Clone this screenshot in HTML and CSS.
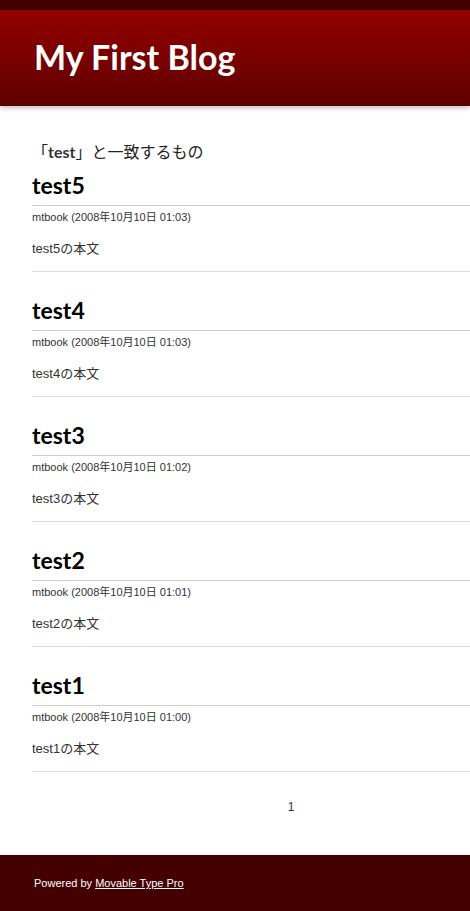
FILE: index.html
```html
<!DOCTYPE html>
<html lang="ja">
<head>
  <meta charset="UTF-8">
  <title>My First Blog: 検索結果</title>
  <link rel="stylesheet" href="styles.css">
</head>
<body>

  <div class="topbar"></div>
  <div class="header">
    <h1 class="blog-name">My First Blog</h1>
  </div>

  <div class="content">
    <h2 class="search-title">「<strong>test</strong>」と一致するもの</h2>

    <div class="entry">
      <h3 class="entry-title">test5</h3>
      <div class="entry-meta">mtbook (2008年10月10日 01:03)</div>
      <div class="entry-body">test5の本文</div>
    </div>

    <div class="entry">
      <h3 class="entry-title">test4</h3>
      <div class="entry-meta">mtbook (2008年10月10日 01:03)</div>
      <div class="entry-body">test4の本文</div>
    </div>

    <div class="entry">
      <h3 class="entry-title">test3</h3>
      <div class="entry-meta">mtbook (2008年10月10日 01:02)</div>
      <div class="entry-body">test3の本文</div>
    </div>

    <div class="entry">
      <h3 class="entry-title">test2</h3>
      <div class="entry-meta">mtbook (2008年10月10日 01:01)</div>
      <div class="entry-body">test2の本文</div>
    </div>

    <div class="entry">
      <h3 class="entry-title">test1</h3>
      <div class="entry-meta">mtbook (2008年10月10日 01:00)</div>
      <div class="entry-body">test1の本文</div>
    </div>

    <div class="pager">1</div>
  </div>

  <div class="footer">
    Powered by <a href="#">Movable Type Pro</a>
  </div>

</body>
</html>
```

FILE: styles.css
```css
body {
  margin: 0;
  font-family: "Liberation Sans", "Noto Sans CJK JP", sans-serif;
  color: #333;
  background-color: #fff;
}
.topbar {
  height: 10px;
  background-color: #440000;
}
.header {
  height: 96px;
  background: linear-gradient(#930000, #5e0000);
  box-shadow: 0 2px 5px rgba(0, 0, 0, 0.25);
  display: flex;
  align-items: center;
}
.blog-name {
  margin: 0 0 4px 34px;
  font-family: Lato, sans-serif;
  font-size: 34px;
  font-weight: bold;
  color: #fff;
}
.content {
  padding: 33px 0 41px 32px;
}
.search-title {
  margin: 0 0 3px;
  font-size: 16px;
  font-weight: normal;
  line-height: 24px;
  color: #222;
  font-family: "Noto Sans CJK JP", sans-serif;
}
.search-title strong {
  font-family: Lato, sans-serif;
  color: #333;
}
.entry {
  padding: 4px 0 14px;
  border-bottom: 1px solid #ddd;
  margin-bottom: 20px;
}
.entry-title {
  margin: 0;
  font-family: Lato, sans-serif;
  font-size: 23px;
  line-height: 28px;
  color: #000;
  padding-bottom: 6px;
  border-bottom: 1px solid #ccc;
}
.entry-meta {
  margin-top: 3px;
  font-size: 11px;
  line-height: 16px;
  color: #333;
}
.entry-body {
  margin-top: 16px;
  font-size: 13px;
  line-height: 16px;
  color: #333;
}
.pager {
  padding: 8px 0 0 80px;
  text-align: center;
  font-size: 12px;
}
.footer {
  background-color: #440000;
  color: #fff;
  font-size: 11px;
  padding: 22px 34px 30px;
}
.footer a {
  color: #fff;
}
```
